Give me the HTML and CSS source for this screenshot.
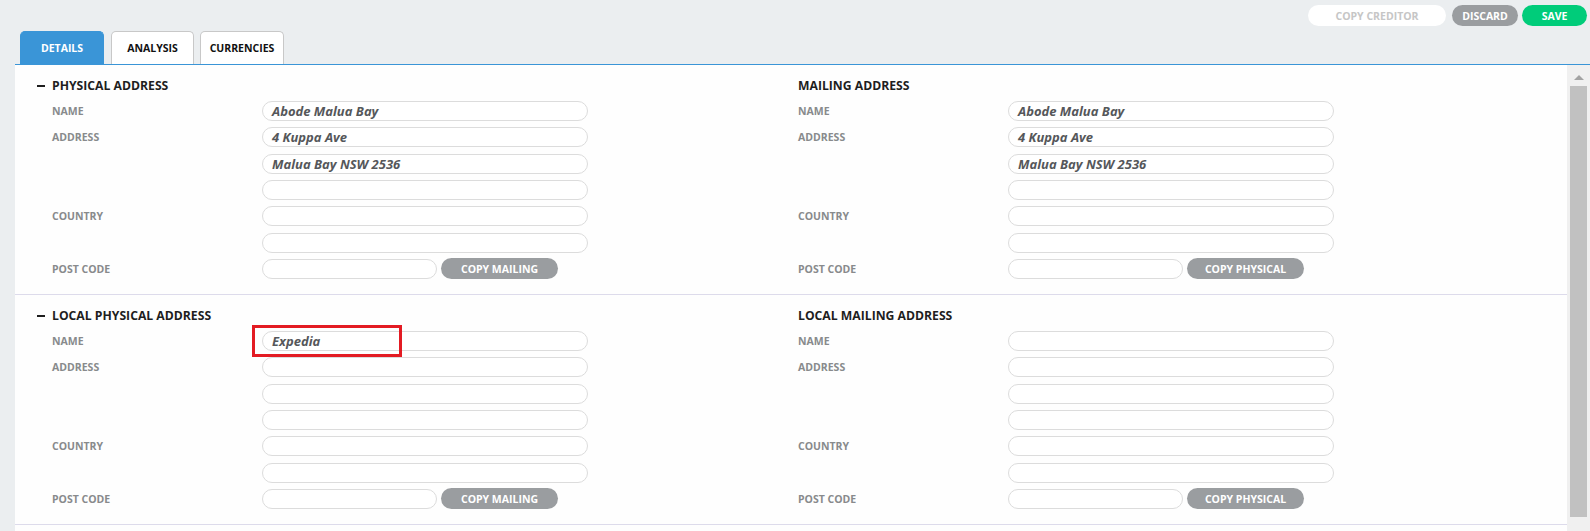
FILE: index.html
```html
<!DOCTYPE html>
<html>
<head>
<meta charset="utf-8">
<link rel="stylesheet" href="styles.css">
</head>
<body>
<div class="topbar">
  <button class="btn btn-copy">COPY CREDITOR</button>
  <button class="btn btn-discard">DISCARD</button>
  <button class="btn btn-save">SAVE</button>
</div>
<div class="tabs">
  <div class="tab tab-active">DETAILS</div>
  <div class="tab tab-analysis">ANALYSIS</div>
  <div class="tab tab-currencies">CURRENCIES</div>
</div>
<div class="panel">
  <div class="content">
    <section class="section">
      <div class="col">
        <h2 class="title"><span class="minus"></span>PHYSICAL ADDRESS</h2>
        <div class="row"><span class="label">NAME</span><div class="field">Abode Malua Bay</div></div>
        <div class="row"><span class="label">ADDRESS</span><div class="field">4 Kuppa Ave</div></div>
        <div class="row"><span class="label"></span><div class="field">Malua Bay NSW 2536</div></div>
        <div class="row"><span class="label"></span><div class="field"></div></div>
        <div class="row"><span class="label">COUNTRY</span><div class="field"></div></div>
        <div class="row"><span class="label"></span><div class="field"></div></div>
        <div class="row"><span class="label">POST CODE</span><div class="field field-short"></div><button class="copy-btn">COPY MAILING</button></div>
      </div>
      <div class="col">
        <h2 class="title">MAILING ADDRESS</h2>
        <div class="row"><span class="label">NAME</span><div class="field">Abode Malua Bay</div></div>
        <div class="row"><span class="label">ADDRESS</span><div class="field">4 Kuppa Ave</div></div>
        <div class="row"><span class="label"></span><div class="field">Malua Bay NSW 2536</div></div>
        <div class="row"><span class="label"></span><div class="field"></div></div>
        <div class="row"><span class="label">COUNTRY</span><div class="field"></div></div>
        <div class="row"><span class="label"></span><div class="field"></div></div>
        <div class="row"><span class="label">POST CODE</span><div class="field field-short"></div><button class="copy-btn">COPY PHYSICAL</button></div>
      </div>
    </section>
    <section class="section">
      <div class="col">
        <h2 class="title"><span class="minus"></span>LOCAL PHYSICAL ADDRESS</h2>
        <div class="row"><span class="label">NAME</span><div class="field field-marked">Expedia<span class="highlight"></span></div></div>
        <div class="row"><span class="label">ADDRESS</span><div class="field"></div></div>
        <div class="row"><span class="label"></span><div class="field"></div></div>
        <div class="row"><span class="label"></span><div class="field"></div></div>
        <div class="row"><span class="label">COUNTRY</span><div class="field"></div></div>
        <div class="row"><span class="label"></span><div class="field"></div></div>
        <div class="row"><span class="label">POST CODE</span><div class="field field-short"></div><button class="copy-btn">COPY MAILING</button></div>
      </div>
      <div class="col">
        <h2 class="title">LOCAL MAILING ADDRESS</h2>
        <div class="row"><span class="label">NAME</span><div class="field"></div></div>
        <div class="row"><span class="label">ADDRESS</span><div class="field"></div></div>
        <div class="row"><span class="label"></span><div class="field"></div></div>
        <div class="row"><span class="label"></span><div class="field"></div></div>
        <div class="row"><span class="label">COUNTRY</span><div class="field"></div></div>
        <div class="row"><span class="label"></span><div class="field"></div></div>
        <div class="row"><span class="label">POST CODE</span><div class="field field-short"></div><button class="copy-btn">COPY PHYSICAL</button></div>
      </div>
    </section>
  </div>
  <div class="scrollbar">
    <div class="scroll-arrow"></div>
    <div class="scroll-thumb"></div>
  </div>
</div>
</body>
</html>
```

FILE: styles.css
```css
* { box-sizing: border-box; }

html, body {
  margin: 0;
  padding: 0;
  height: 531px;
  overflow: hidden;
}

body {
  background: #ebeef0;
  font-family: "Open Sans", "Noto Sans", sans-serif;
  color: #222;
}

.topbar {
  height: 31px;
  display: flex;
  justify-content: flex-end;
  align-items: flex-start;
  padding: 5px 3px 0 0;
}

.btn {
  height: 21px;
  border: none;
  border-radius: 11px;
  font-family: inherit;
  font-weight: 700;
  font-size: 10.5px;
  padding: 0;
  color: #fff;
}

.btn-copy {
  width: 138px;
  background: #fff;
  color: #c6c6c6;
  margin-right: 6px;
}

.btn-discard {
  width: 66px;
  background: #9a9da0;
  margin-right: 4px;
}

.btn-save {
  width: 65px;
  background: #00cc7a;
}

.tabs {
  display: flex;
  height: 33px;
  padding-left: 20px;
}

.tab {
  height: 33px;
  border: 1px solid #c8c8c8;
  border-bottom: none;
  border-radius: 5px 5px 0 0;
  background: #fff;
  font-size: 10.5px;
  font-weight: 700;
  color: #111;
  display: flex;
  align-items: center;
  justify-content: center;
}

.tab-active {
  width: 84px;
  background: #3a95d7;
  border-color: #3a95d7;
  color: #fff;
  margin-right: 7px;
}

.tab-analysis {
  width: 83px;
  margin-right: 6px;
}

.tab-currencies {
  width: 84px;
}

.panel {
  margin-left: 15px;
  height: 467px;
  border-top: 1px solid #3a95d7;
  display: flex;
}

.content {
  flex: 1;
  background: #fefefe;
  overflow: hidden;
}

.section {
  display: grid;
  grid-template-columns: 746px 746px;
  padding: 13px 0 15px 37px;
  border-bottom: 1px solid #dddbeb;
}

.title {
  margin: 0 0 7px 0;
  height: 16px;
  line-height: 16px;
  font-size: 12.2px;
  font-weight: 700;
  color: #1e1e1e;
  display: flex;
  align-items: center;
}

.minus {
  width: 8px;
  height: 2px;
  background: #1e1e1e;
  margin-left: -15px;
  margin-right: 7px;
}

.row {
  display: flex;
  align-items: center;
  height: 20px;
  margin-bottom: 6.33px;
}

.row:last-child {
  margin-bottom: 0;
}

.label {
  width: 210px;
  flex: none;
  font-size: 10.5px;
  font-weight: 700;
  color: #888a8c;
}

.field {
  position: relative;
  width: 326px;
  height: 20px;
  border: 1px solid #dcdcdc;
  border-radius: 10px;
  background: #fff;
  padding-left: 9px;
  font-size: 13px;
  font-weight: 700;
  font-style: italic;
  line-height: 18px;
  color: #55575a;
}

.field-short {
  width: 175px;
}

.copy-btn {
  width: 117px;
  height: 21px;
  margin-left: 4px;
  border: none;
  border-radius: 11px;
  background: #9a9da0;
  color: #fff;
  font-family: inherit;
  font-size: 10.5px;
  font-weight: 700;
  padding: 0;
}

.highlight {
  position: absolute;
  left: -11px;
  top: -7px;
  width: 150px;
  height: 32px;
  border: 3px solid #e31b23;
}

.scrollbar {
  width: 23px;
  flex: none;
  background: #f0f0f0;
  display: flex;
  flex-direction: column;
  align-items: center;
}

.scroll-arrow {
  margin-top: 10px;
  width: 0;
  height: 0;
  border-left: 5px solid transparent;
  border-right: 5px solid transparent;
  border-bottom: 5px solid #a3a3a3;
}

.scroll-thumb {
  margin-top: 6px;
  width: 17px;
  height: 431px;
  background: #c1c1c1;
}
```
